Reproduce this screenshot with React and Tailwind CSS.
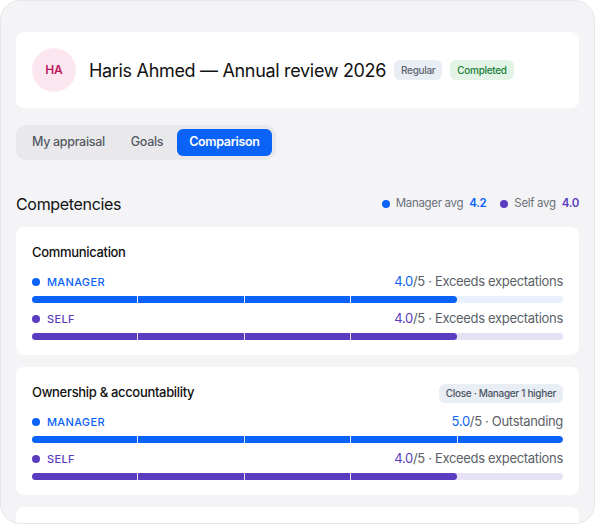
import React from 'react';

const BLUE = 'manager';

const Bar = ({ value, kind }) => {
    const filled = Math.round(value);
    const fill = kind === BLUE ? 'bg-[#0a63f6]' : 'bg-[#5a3cc0]';
    const track = kind === BLUE ? 'bg-[#e9f0fd]' : 'bg-[#e6e1f5]';
    return (
        <div className={`flex gap-px h-[7px] rounded-full overflow-hidden ${track}`}>
            {[0, 1, 2, 3, 4].map((i) => (
                <div
                    key={i}
                    className={`flex-1 ${i < filled ? fill : ''} ${i === filled - 1 ? 'rounded-r-full' : ''}`}
                />
            ))}
        </div>
    );
};

const Row = ({ kind, value, label }) => {
    const isManager = kind === BLUE;
    return (
        <>
            <div className="flex items-center justify-between h-5">
                <div className="flex items-center gap-[7px]">
                    <span className={`w-2 h-2 rounded-full ${isManager ? 'bg-[#0a63f6]' : 'bg-[#5a3cc0]'}`} />
                    <span className={`text-[11px] font-medium tracking-[0.03em] ${isManager ? 'text-[#0a63f6]' : 'text-[#5a3cc0]'}`}>
                        {isManager ? 'MANAGER' : 'SELF'}
                    </span>
                </div>
                <div className="text-[13px] text-[#5b5f67]">
                    <span className={isManager ? 'text-[#0a63f6]' : 'text-[#5a3cc0]'}>{value.toFixed(1)}</span>
                    /5 · {label}
                </div>
            </div>
            <div className="mt-1">
                <Bar value={value} kind={kind} />
            </div>
        </>
    );
};

const Competency = ({ title, badge, manager, self }) => (
    <div className="bg-white rounded-lg px-4 pt-4 pb-[15px]">
        <div className="flex items-center justify-between h-5">
            <h3 className="text-[13px] font-medium text-[#111]">{title}</h3>
            {badge && (
                <span className="h-[19px] px-[7px] flex items-center rounded-md bg-[#e9edf4] text-[10px] font-medium text-[#4b5563]">
                    {badge}
                </span>
            )}
        </div>
        <div className="mt-[9px]">
            <Row kind="manager" value={manager.value} label={manager.label} />
        </div>
        <div className="mt-[6px]">
            <Row kind="self" value={self.value} label={self.label} />
        </div>
    </div>
);

const App = () => {
    return (
        <div className="bg-white min-h-screen font-['Inter',sans-serif] tracking-[-0.02em]">
            <div className="w-[595px] h-[524px] overflow-hidden rounded-[20px] border border-[#e6e7ea] bg-[#f4f4f6] px-[15px] pt-[31px]">
                {/* Header */}
                <div className="bg-white rounded-lg p-4 flex items-center">
                    <div className="w-11 h-11 rounded-full bg-[#fce7f1] flex items-center justify-center text-[12px] font-semibold text-[#be185d] tracking-normal">
                        HA
                    </div>
                    <h1 className="ml-[13px] text-[18px] text-[#111]">Haris Ahmed — Annual review 2026</h1>
                    <span className="ml-2 h-5 px-[7px] flex items-center rounded-md bg-[#e9edf4] text-[10px] font-medium text-[#5b6270]">
                        Regular
                    </span>
                    <span className="ml-2 h-5 px-[7px] flex items-center rounded-md bg-[#e3f3e6] text-[10px] font-medium text-[#1a7f37]">
                        Completed
                    </span>
                </div>

                {/* Tabs */}
                <div className="mt-[17px] inline-flex items-center gap-0.5 p-1 rounded-[10px] bg-[#e9e9ec]">
                    <button className="h-[27px] px-3 text-[12.5px] font-medium text-[#555a63]">My appraisal</button>
                    <button className="h-[27px] px-3 text-[12.5px] font-medium text-[#555a63]">Goals</button>
                    <button className="h-[27px] px-3 rounded-md bg-[#0a63f6] text-[12.5px] font-semibold text-white">Comparison</button>
                </div>

                {/* Competencies */}
                <div className="mt-8 flex items-center justify-between h-6">
                    <h2 className="text-[16px] text-[#111]">Competencies</h2>
                    <div className="flex items-center gap-3.5 text-[11.5px]">
                        <div className="flex items-center gap-1.5">
                            <span className="w-2 h-2 rounded-full bg-[#0a63f6]" />
                            <span className="text-[#6b7079]">Manager avg</span>
                            <span className="font-semibold text-[#0a63f6]">4.2</span>
                        </div>
                        <div className="flex items-center gap-1.5">
                            <span className="w-2 h-2 rounded-full bg-[#5a3cc0]" />
                            <span className="text-[#6b7079]">Self avg</span>
                            <span className="font-semibold text-[#5a3cc0]">4.0</span>
                        </div>
                    </div>
                </div>

                <div className="mt-[11px] flex flex-col gap-3">
                    <Competency
                        title="Communication"
                        manager={{ value: 4, label: 'Exceeds expectations' }}
                        self={{ value: 4, label: 'Exceeds expectations' }}
                    />
                    <Competency
                        title="Ownership & accountability"
                        badge="Close · Manager 1 higher"
                        manager={{ value: 5, label: 'Outstanding' }}
                        self={{ value: 4, label: 'Exceeds expectations' }}
                    />
                    <Competency
                        title="Collaboration"
                        manager={{ value: 4, label: 'Exceeds expectations' }}
                        self={{ value: 4, label: 'Exceeds expectations' }}
                    />
                </div>
            </div>
        </div>
    );
};

export default App;
